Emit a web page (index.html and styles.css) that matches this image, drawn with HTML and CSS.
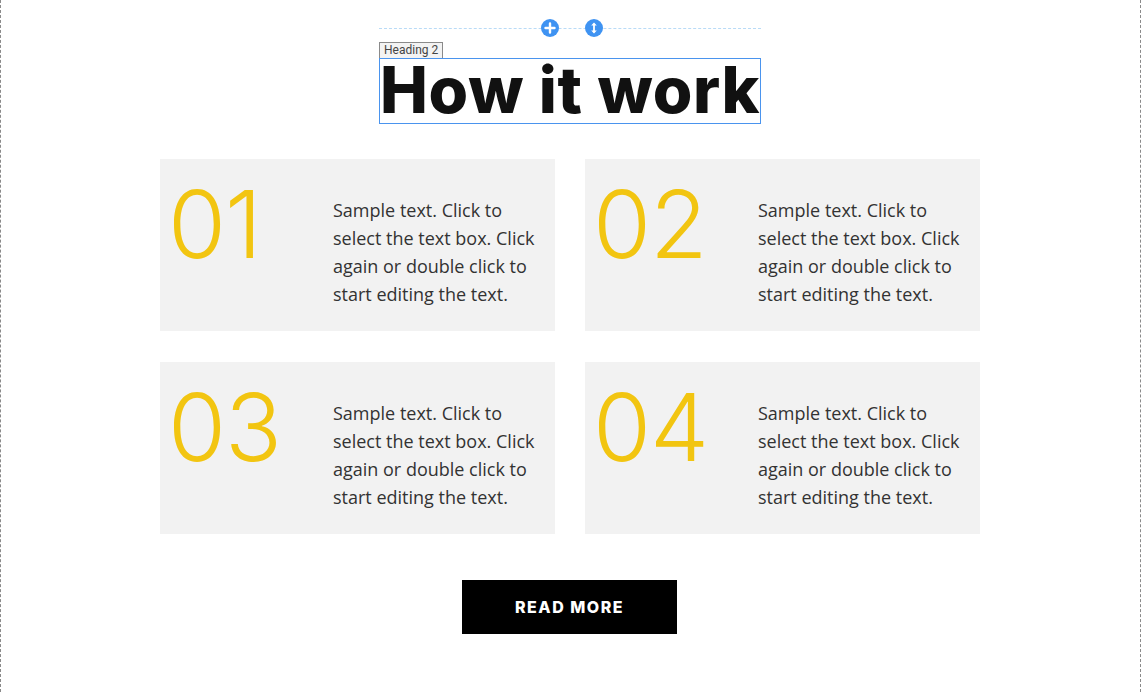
FILE: index.html
```html
<!DOCTYPE html>
<html>
<head>
<meta charset="utf-8">
<link rel="stylesheet" href="styles.css">
</head>
<body>
<div class="frame">
  <div class="head-block">
    <div class="insert-bar">
      <span class="ctl">
        <svg width="18" height="18" viewBox="0 0 18 18"><circle cx="9" cy="9" r="9" fill="#3f93f2"/><path d="M9 4.5v9M4.5 9h9" stroke="#fff" stroke-width="2.4" stroke-linecap="round"/></svg>
      </span>
      <span class="ctl">
        <svg width="18" height="18" viewBox="0 0 18 18"><circle cx="9" cy="9" r="9" fill="#3f93f2"/><path d="M9 5.5v7" stroke="#fff" stroke-width="1.8" stroke-linecap="round"/><path d="M6.2 6.6L9 3.6l2.8 3z M6.2 11.4L9 14.4l2.8-3z" fill="#fff"/></svg>
      </span>
    </div>
    <div class="tag">Heading 2</div>
    <h2 class="title">How it work</h2>
  </div>

  <div class="steps">
    <div class="step">
      <div class="num">01</div>
      <p class="desc">Sample text. Click to select the text box. Click again or double click to start editing the text.</p>
    </div>
    <div class="step">
      <div class="num">02</div>
      <p class="desc">Sample text. Click to select the text box. Click again or double click to start editing the text.</p>
    </div>
    <div class="step">
      <div class="num">03</div>
      <p class="desc">Sample text. Click to select the text box. Click again or double click to start editing the text.</p>
    </div>
    <div class="step">
      <div class="num">04</div>
      <p class="desc">Sample text. Click to select the text box. Click again or double click to start editing the text.</p>
    </div>
  </div>

  <div class="actions">
    <a class="btn">READ MORE</a>
  </div>
</div>
</body>
</html>
```

FILE: styles.css
```css
html, body {
  margin: 0;
  padding: 0;
  background: #fff;
}
.frame {
  box-sizing: border-box;
  width: 1141px;
  height: 692px;
  border-left: 1px dashed #8a8a8a;
  border-right: 1px dashed #8a8a8a;
  padding-top: 19px;
  padding-right: 1px;
  overflow: hidden;
}
.head-block {
  width: 382px;
  margin: 0 auto;
}
.insert-bar {
  position: relative;
  height: 18px;
  display: flex;
  justify-content: center;
  gap: 26px;
  padding-left: 4px;
}
.insert-bar::before {
  content: "";
  position: absolute;
  left: 0;
  right: 0;
  top: 9px;
  border-top: 1px dashed #b9dbf7;
}
.ctl {
  position: relative;
  width: 18px;
  height: 18px;
  display: block;
}
.ctl svg { display: block; }
.tag {
  display: block;
  width: max-content;
  margin-top: 5px;
  box-sizing: border-box;
  height: 16px;
  padding: 0 4px;
  border: 1px solid #8a8a8a;
  border-bottom: none;
  background: #f3f3f3;
  font-family: "Roboto", "Liberation Sans", sans-serif;
  font-size: 12px;
  line-height: 15px;
  color: #444;
}
.title {
  margin: 0;
  box-sizing: border-box;
  height: 66px;
  border: 1px solid #4a94ee;
  font-family: "Inter", "Liberation Sans", sans-serif;
  font-weight: 800;
  font-size: 64px;
  line-height: 62px;
  color: #111;
  white-space: nowrap;
  letter-spacing: 0.7px;
  padding-left: 0;
}
.steps {
  width: 820px;
  margin: 35px auto 0;
  display: grid;
  grid-template-columns: 395px 395px;
  grid-auto-rows: 172px;
  column-gap: 30px;
  row-gap: 31px;
}
.step {
  background: #f2f2f2;
  box-sizing: border-box;
  display: flex;
  padding: 15px 12px 0 8px;
}
.num {
  width: 165px;
  flex: none;
  font-family: "Inter", "Liberation Sans", sans-serif;
  font-weight: 300;
  font-size: 94px;
  line-height: 100px;
  color: #f2c511;
  letter-spacing: -1px;
}
.desc {
  margin: 0;
  padding-top: 22px;
  font-family: "Open Sans", "Liberation Sans", sans-serif;
  font-size: 18px;
  line-height: 28px;
  color: #333;
}
.actions {
  display: flex;
  justify-content: center;
  margin-top: 46px;
  padding-right: 1px;
}
.btn {
  display: flex;
  align-items: center;
  justify-content: center;
  width: 215px;
  height: 54px;
  background: #000;
  color: #fff;
  font-family: "Inter", "Liberation Sans", sans-serif;
  font-weight: 800;
  font-size: 16px;
  letter-spacing: 1.5px;
  text-decoration: none;
}
```
